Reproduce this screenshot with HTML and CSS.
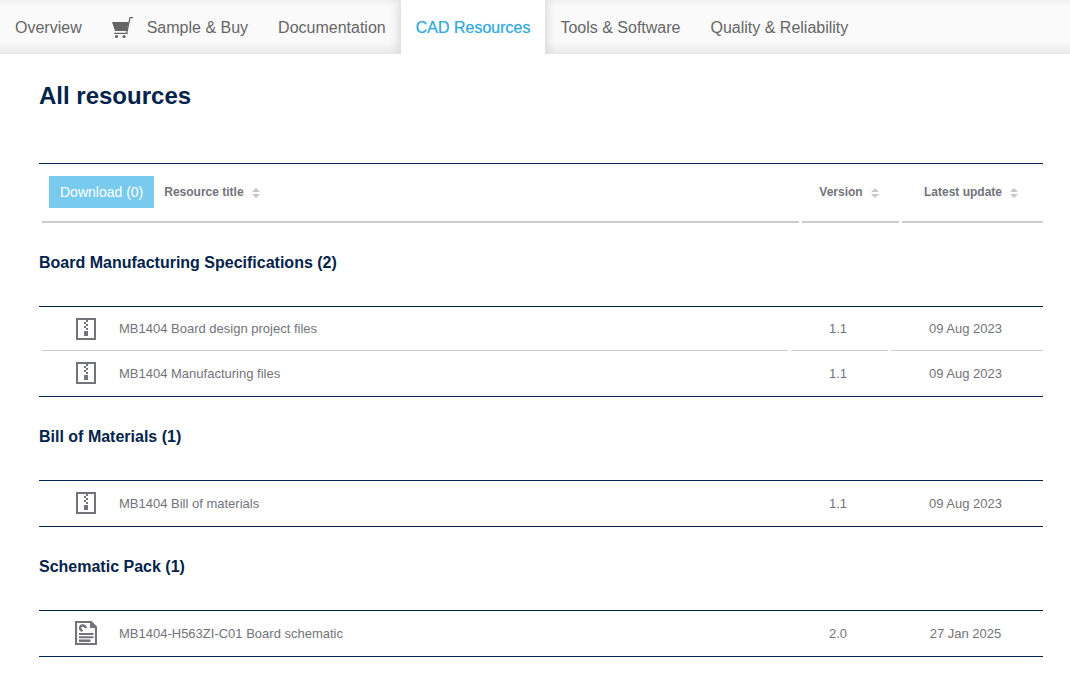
FILE: index.html
```html
<!DOCTYPE html>
<html lang="en">
<head>
<meta charset="utf-8">
<title>CAD Resources</title>
<link rel="stylesheet" href="styles.css">
</head>
<body>
<svg class="symbols" aria-hidden="true">
  <symbol id="sort" viewBox="0 0 8 10"><path fill="#c8c8ca" d="M0 4 4 0l4 4zM0 6h8l-4 4z"/></symbol>
  <symbol id="zip" viewBox="0 0 20 22"><path fill="none" stroke="#73737b" stroke-width="2" d="M1 1h18v20H1z"/><path fill="#73737b" d="M10 2h2v2h-2zM8 4h2v2H8zM10 6h2v2h-2zM8 8h2v2H8zM10 10h2v2h-2zM8 13h4v5H8z"/></symbol>
  <symbol id="doc" viewBox="0 0 22 24"><path fill="none" stroke="#73737b" stroke-width="2.200" d="M1 1h15l5 5v17H1z"/><path fill="#73737b" d="M15 1l6 6h-6zM4 12h14.500v2H4zM4 15.300h14.500v2H4zM4 18.600h11.500v2.300H4z"/><path fill="none" stroke="#73737b" stroke-width="2.400" d="M11 7C10 4 5.500 3.500 5 7c0 2 1 2 2.500 3"/></symbol>
</svg>
<nav class="tabs" aria-label="Product">
  <a class="tab" href="#overview">Overview</a>
  <a class="tab" href="#buy"><svg class="cart" viewBox="0 0 21 22" aria-hidden="true"><path fill="#666" d="M0 5h16.500l-1.500 9H3z"/><path fill="none" stroke="#666" stroke-width="1.3" d="M21 .7h-3L15 14.500v1.800H2"/><circle cx="4.500" cy="19.500" r="1.600" fill="#666"/><circle cx="12" cy="19.500" r="1.600" fill="#666"/></svg>Sample &amp; Buy</a>
  <a class="tab" href="#documentation">Documentation</a>
  <a class="tab active" href="#cad" aria-current="page">CAD Resources</a>
  <a class="tab" href="#tools">Tools &amp; Software</a>
  <a class="tab" href="#quality">Quality &amp; Reliability</a>
</nav>
<main class="content">
  <h1 class="title">All resources</h1>
  <table class="head">
    <thead><tr>
      <th><div class="lead"><button class="download" type="button">Download (0)</button><span class="sortable">Resource title<svg class="sort" aria-hidden="true"><use href="#sort"/></svg></span></div></th>
      <th class="version"><span class="sortable">Version<svg class="sort" aria-hidden="true"><use href="#sort"/></svg></span></th>
      <th class="date"><span class="sortable">Latest update<svg class="sort" aria-hidden="true"><use href="#sort"/></svg></span></th>
    </tr></thead>
  </table>
  <h2 class="group">Board Manufacturing Specifications (2)</h2>
  <table class="files">
    <tbody>
      <tr><td><div class="file"><svg class="zip" aria-hidden="true"><use href="#zip"/></svg>MB1404 Board design project files</div></td><td class="version">1.1</td><td class="date">09 Aug 2023</td></tr>
      <tr><td><div class="file"><svg class="zip" aria-hidden="true"><use href="#zip"/></svg>MB1404 Manufacturing files</div></td><td class="version">1.1</td><td class="date">09 Aug 2023</td></tr>
    </tbody>
  </table>
  <h2 class="group">Bill of Materials (1)</h2>
  <table class="files">
    <tbody>
      <tr><td><div class="file"><svg class="zip" aria-hidden="true"><use href="#zip"/></svg>MB1404 Bill of materials</div></td><td class="version">1.1</td><td class="date">09 Aug 2023</td></tr>
    </tbody>
  </table>
  <h2 class="group">Schematic Pack (1)</h2>
  <table class="files">
    <tbody>
      <tr><td><div class="file"><svg class="doc" aria-hidden="true"><use href="#doc"/></svg>MB1404-H563ZI-C01 Board schematic</div></td><td class="version">2.0</td><td class="date">27 Jan 2025</td></tr>
    </tbody>
  </table>
</main>
</body>
</html>
```
FILE: styles.css
```css
* { box-sizing: border-box; }
body {
  margin: 0;
  background: #fff;
  color: #73737b;
  font-family: "Liberation Sans", Arial, sans-serif;
  font-size: 13px;
}
.symbols { display: none; }
.tabs {
  display: flex;
  height: 54px;
  overflow: hidden;
  background: linear-gradient(#f0f0f0, #fafafa 6px, #fafafa 42px, #e8e8e8);
}
.tab {
  display: flex;
  align-items: center;
  padding: 2px 15px 0;
  color: #666;
  font-size: 16px;
  line-height: 24px;
  text-decoration: none;
  white-space: nowrap;
}
.tab.active {
  background: #fff;
  color: #39a9dc;
  text-shadow: 0 0 1px #7fd0f2;
  box-shadow: 0 0 12px rgba(0, 0, 0, .2);
}
.cart { width: 21px; height: 22px; margin-right: 14px; }
.content { padding: 26px 27px 24px 39px; }
.title {
  margin: 0 0 51px;
  color: #03234b;
  font-size: 24px;
  line-height: 32px;
}
table {
  width: 100%;
  border-collapse: separate;
  border-spacing: 0;
  table-layout: fixed;
  border-top: 1px solid #03234b;
}
th, td {
  padding: 0;
  background: linear-gradient(#ccc, #ccc) no-repeat right bottom / calc(100% - 3px) 2px;
}
th { height: 59px; font-size: 12px; padding-bottom: 4px; }
td { height: 44px; padding-bottom: 1px; background-size: calc(100% - 3px) 1px; }
.files { border-bottom: 1px solid #03234b; }
.files tr:last-child td { height: 45px; background: none; }
.version { width: 100px; text-align: center; }
.head .date { width: 144px; }
.files .date { width: 155px; text-align: center; }
.lead { display: flex; align-items: center; gap: 10px; padding-left: 10px; }
.download {
  height: 32px;
  padding: 0 11px;
  border: 0;
  background: #78caef;
  color: #fff;
  font-family: inherit;
  font-size: 14px;
}
.sortable { display: inline-flex; align-items: center; }
.sort { width: 8px; height: 10px; margin: 2px 0 0 8px; }
.group {
  margin: 0;
  padding: 28px 0 31px;
  color: #03234b;
  font-size: 16px;
  line-height: 24px;
}
.file { display: flex; align-items: center; }
.zip { width: 20px; height: 22px; margin: 0 23px 0 37px; }
.doc { width: 22px; height: 24px; margin: 0 22px 0 36px; }
```
